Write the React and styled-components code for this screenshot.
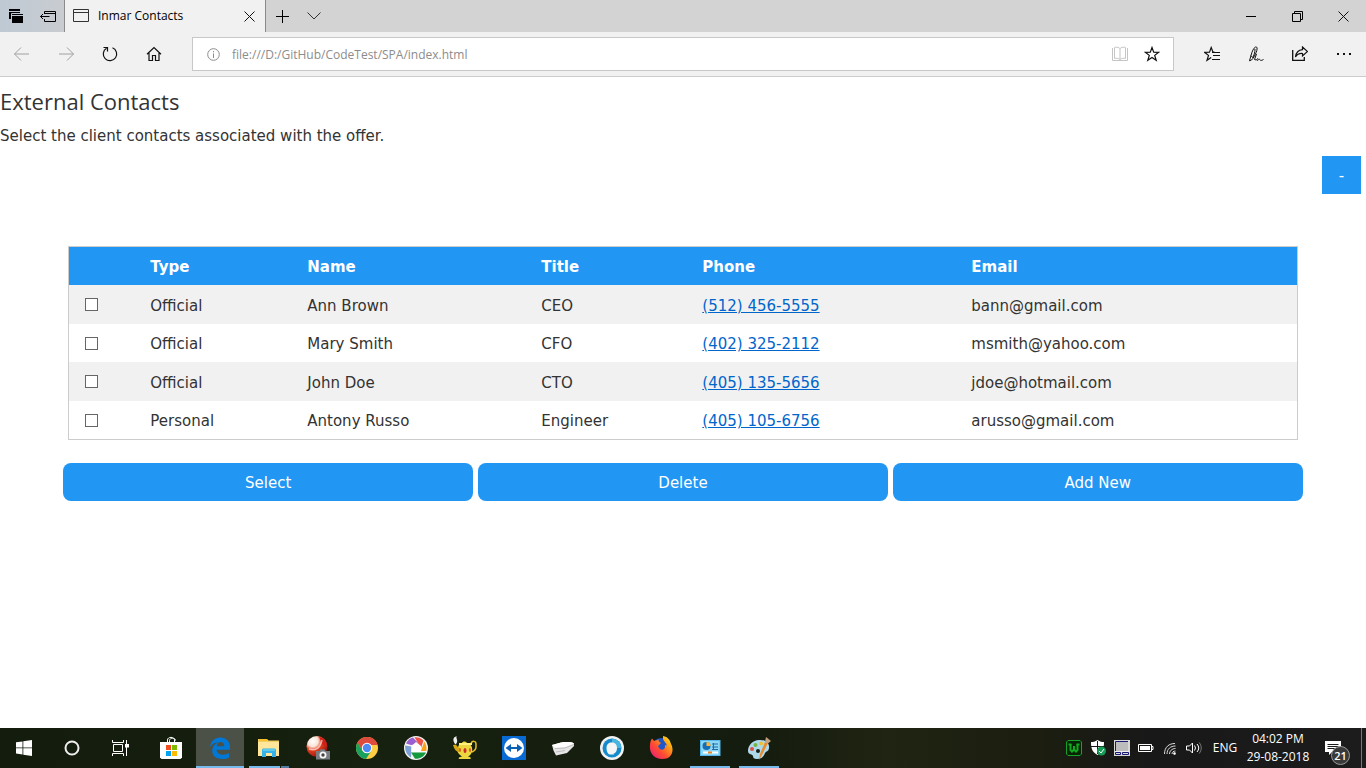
import React from "react";
import styled, { createGlobalStyle, css } from "styled-components";

const ui = `"Open Sans", "Noto Sans", sans-serif`;
const blue = "#2196f3";

const GlobalStyle = createGlobalStyle`
  *, *::before, *::after { box-sizing: border-box; }
  body {
    margin: 0;
    background: #fff;
    color: #333;
    font: 15px/22px "DejaVu Sans", Verdana, sans-serif;
  }
  button { margin: 0; padding: 0; border: 0; background: none; color: inherit; font: inherit; cursor: pointer; }
  svg { display: block; flex: none; }
`;

const Screen = styled.div`
  display: flex;
  flex-direction: column;
  min-height: 100vh;
`;

/* ---- browser chrome ---- */
const TitleBar = styled.header`
  display: flex;
  height: 32px;
  background: #d3d3d3;
  color: #000;
  font-family: ${ui};
  font-size: 12px;
`;
const TabTools = styled.div`
  display: flex;
  width: 64px;
  background: linear-gradient(90deg, #bec9d4, #c9ccd0);
`;
const ChromeButton = styled.button`
  display: flex;
  align-items: center;
  justify-content: center;
  width: ${(p) => p.$w || 44}px;
  height: 100%;
  color: ${(p) => (p.$muted ? "#a0a0a0" : "#111")};
`;
const Tab = styled.div`
  display: flex;
  align-items: center;
  width: 202px;
  padding-left: 8px;
  background: #f1f1f1;
  border: solid #8a8a8a;
  border-width: 0 1px;
`;
const TabTitle = styled.span`
  flex: 1;
  margin-left: 9px;
  white-space: nowrap;
`;
const Spacer = styled.div`
  flex: 1;
`;
const Toolbar = styled.nav`
  display: flex;
  align-items: center;
  height: 45px;
  background: #f1f1f1;
  border-bottom: 1px solid #ccc;
`;
const AddressBar = styled.div`
  display: flex;
  flex: 1;
  align-items: center;
  height: 34px;
  margin: 0 16px;
  padding: 0 5px 0 14px;
  background: #fff;
  border: 1px solid #c8c8c8;
  color: #8c8c8c;
`;
const AddressInput = styled.input`
  flex: 1;
  min-width: 0;
  margin-left: 12px;
  padding: 2px 0 0;
  border: 0;
  outline: 0;
  background: none;
  color: #8c8c8c;
  font: 12px/18px ${ui};
`;

/* ---- page ---- */
const Page = styled.main`
  flex: 1;
  padding-top: 6px;
`;
const Heading = styled.h3`
  margin: 0;
  font: 400 22px/36px ${ui};
`;
const Intro = styled.p`
  margin: 6px 0 9px;
`;
const ToggleRow = styled.div`
  display: flex;
  justify-content: flex-end;
  padding-right: 5px;
`;
const ToggleButton = styled.button`
  width: 39px;
  height: 38px;
  padding-top: 2px;
  background: ${blue};
  color: #fff;
`;
const ContactTable = styled.table`
  width: 90%;
  margin: 52px auto 23px;
  border: 1px solid #ccc;
  border-spacing: 0;
  table-layout: fixed;
`;
const HeadCell = styled.th`
  width: ${(p) => (p.$w ? `${p.$w}px` : "auto")};
  height: 38px;
  padding: 2px 8px 0;
  background: ${blue};
  color: #fff;
  text-align: left;
`;
const Row = styled.tr`
  height: 38px;
  &:nth-child(odd) { height: 39px; background: #f1f1f1; }
`;
const Cell = styled.td`
  padding: 2px 8px 0;
  &:first-child { padding: 0 8px 0 16px; }
`;
const Check = styled.input`
  display: block;
  width: 13px;
  height: 13px;
  margin: 0;
  appearance: none;
  background: #fff;
  border: 1px solid #666;
  &:checked { background: ${blue}; }
`;
const PhoneLink = styled.a`
  color: #0066cc;
`;
const Actions = styled.div`
  display: flex;
  justify-content: center;
  gap: 5px;
`;
const ActionButton = styled.button`
  width: 30%;
  height: 38px;
  padding-top: 2px;
  border-radius: 8px;
  background: ${blue};
  color: #fff;
`;

/* ---- taskbar ---- */
const Taskbar = styled.footer`
  display: flex;
  height: 40px;
  background: linear-gradient(90deg, #131c0d, #17210f 30%, #141c0f 55%, #202412 65%, #1b1e10 76%, #181818 84%, #1c1c1c);
  color: #fff;
  font-family: ${ui};
  font-size: 12px;
  line-height: 18px;
`;
const AppList = styled.div`
  display: flex;
  gap: 1px;
  padding-left: 3px;
`;
const TaskButton = styled.button`
  position: relative;
  display: flex;
  align-items: center;
  justify-content: center;
  width: 48px;
  height: 40px;
  ${(p) => p.$state && css`
    background: ${p.$state === "active" ? "#4b5146" : "none"};
    &::after {
      content: "";
      position: absolute;
      bottom: 0;
      left: ${p.$state === "active" ? 0 : 4}px;
      right: ${p.$state === "active" ? 0 : 4}px;
      height: 2px;
      background: ${p.$state === "stacked" ? "linear-gradient(90deg, #76b9ed 31px, #17210f 31px, #17210f 32px, #527da0 32px)" : "#76b9ed"};
    }
  `}
`;
const Tray = styled.div`
  display: flex;
  align-items: center;
`;
const TrayButton = styled.button`
  display: flex;
  align-items: center;
  justify-content: center;
  width: 24px;
  height: 40px;
`;
const Language = styled.button`
  width: 32px;
  height: 40px;
  padding-left: 6px;
`;
const Clock = styled.time`
  width: 80px;
  text-align: center;
`;
const Notifications = styled.button`
  position: relative;
  width: 43px;
  height: 40px;
  padding-left: 7px;
`;
const Badge = styled.span`
  position: absolute;
  top: 18px;
  left: 13px;
  width: 19px;
  height: 19px;
  border: 1px solid #999;
  border-radius: 50%;
  background: #3a3a3a;
  font-size: 11px;
  font-weight: 600;
  line-height: 17px;
  text-align: center;
`;
const ShowDesktop = styled.button`
  width: 5px;
  height: 40px;
  border-left: 1px solid #777;
`;

const Line = ({ w = 16, h = 16, children, sw = 1, ...rest }) => (
  <svg width={w} height={h} viewBox={`0 0 ${w} ${h}`} fill="none" stroke="currentColor" strokeWidth={sw} aria-hidden="true" {...rest}>
    {children}
  </svg>
);
const Art = ({ size = 24, children }) => (
  <svg width={size} height={size} viewBox="0 0 24 24" aria-hidden="true">{children}</svg>
);

const StackIcon = () => (
  <Line><path d="M1 1h11v4h3v10H4v-4H1z" fill="#000" stroke="none" /><path d="M1 3.5h11M3.5 11V5.500H15M4 7.500h11" stroke="#c0cad4" /></Line>
);
const SetAsideIcon = () => (
  <Line><path d="M4.5 6V3.5h11v10h-11V11M5 5.5h10M.5 8.500h9M3 6L.5 8.500 3 11" stroke="#000" /></Line>
);
const WindowIcon = () => (
  <Line w={16} h={14}><path d="M.5.5h15v12H.5zM.5 3.500h15" stroke="#333" /></Line>
);
const CloseIcon = () => <Line w={11} h={11}><path d="M.5.5l10 10M10.500.5l-10 10" /></Line>;
const PlusIcon = () => <Line w={13} h={13}><path d="M6.500 0v13M0 6.500h13" stroke="#000" /></Line>;
const ChevronIcon = () => <Line w={14} h={8}><path d="M.5.5L7 7 13.500.5" stroke="#333" /></Line>;
const MinimizeIcon = () => <Line w={10} h={10}><path d="M0 5.500h10" stroke="#000" /></Line>;
const RestoreIcon = () => <Line w={11} h={11}><path d="M.5 2.500h8v8h-8zM2.500 2V.5h8v8H9" stroke="#000" /></Line>;
const BackIcon = () => <Line><path d="M.5 8H15M7 1.500L.5 8 7 14.500" /></Line>;
const ForwardIcon = () => <Line><path d="M1 8h14.500M9 1.500L15.500 8 9 14.500" /></Line>;
const RefreshIcon = () => <Line sw={1.2}><path d="M4.500 2.300A6.700 6.700 0 1 0 10.500 1.800M1.500 1.500H5.500V5.500" /></Line>;
const HomeIcon = () => <Line sw={1.2}><path d="M1 8.300L8 1.500l7 6.800M3 7v7.500h3.500V9.500h3v5H13V7" /></Line>;
const InfoIcon = () => <Line w={13} h={13}><circle cx="6.500" cy="6.500" r="5.800" /><path d="M6.500 5.500V10M6.500 3v1.300" /></Line>;
const BookIcon = () => (
  <Line><path d="M.5 2v12.500h15V2" stroke="#c5c5c5" /><path d="M8 2.500C6.500 1 3.500 1 2.500 1.500v11c1.500-.5 4-.3 5.500 1 1.500-1.300 4-1.500 5.500-1v-11C12.500 1 9.500 1 8 2.500zv11" stroke="#c5c5c5" /></Line>
);
const starPath = "M8 1.500l1.700 4.700 5 .1-4 3.100 1.500 4.900L8 11.400l-4.200 2.900 1.500-4.900-4-3.100 5-.1z";
const StarIcon = () => <Line sw={1.2}><path d={starPath} /></Line>;
const FavoritesIcon = () => (
  <Line><path d="M10.500 6.200H9L7.200 1.500 5.500 6.200l-5 .1 4 3.100L3 14.300l4.200-2.900" strokeWidth="1.200" /><path d="M8 6.500h8M9 9.500h7M8 13.500h8" /></Line>
);
const PenIcon = () => (
  <Line><path d="M1.500 14.800L3 9.500C4 5.500 5.500 2 7.500 1c2-.5 2 2 .7 5.300C7.200 9.200 5.500 12 3.500 14l-2 .8zM4.500 12C6 9.500 7 6.500 7 3M2.800 9.500l1.500 1.500M9.500 14.800c1-2.300 2-2 2.400-1s2 .7 3.600-.3M8.500 8L6.500 13.500q1.500 1.500 3.500-1" /></Line>
);
const ShareIcon = () => (
  <Line><path d="M.7 4v10.300h11.600V11" strokeWidth="1.300" /><path d="M10.500 1l5 4.500-5 4.500V7.500C7 7.200 5 8.500 3.500 11 4 7 6.500 4 10.500 3.700z" strokeWidth="1.200" /></Line>
);
const DotsIcon = () => <Line><path d="M1 8h2M7 8h2M13 8h2" strokeWidth="2" /></Line>;

const WindowsIcon = () => (
  <svg width="16" height="16" viewBox="0 0 16 16" fill="#fff" aria-hidden="true"><path d="M0 2.300L6.500 1.400V7.500H0zM7.300 1.300L16 0v7.500H7.300zM0 8.300h6.500v6.200L0 13.600zM7.300 8.300H16V16l-8.700-1.300z" /></svg>
);
const CortanaIcon = () => <Line sw={2}><circle cx="8" cy="8" r="6.500" stroke="#eee" /></Line>;
const TaskViewIcon = () => (
  <Line w={17}><path d="M.5 0v2.500h11V0M.5 16v-2.500h11V16M1.500 4.500h9v7h-9zM14.500 0v16" /><path d="M13 4h4v3.500h-4z" fill="#fff" stroke="none" /></Line>
);
const StoreIcon = () => (
  <Art><path d="M8.500 7V4c0-3.500 7-3.500 7 0v3M10.500 6V4.500c0-3 6-3 6 0" fill="none" stroke="#fff" /><path d="M1 6h22v15.500l-1.500 1.500h-19L1 21.500z" fill="#fff" /><path d="M7 9h5v5H7z" fill="#f25022" /><path d="M13 9h5v5h-5z" fill="#7fba00" /><path d="M7 15h5v5H7z" fill="#00a4ef" /><path d="M13 15h5v5h-5z" fill="#ffb900" /></Art>
);
const EdgeIcon = () => (
  <Art><path d="M2 11C2.800 5 7 1.500 12.300 1.500c6 0 9.700 4.300 9.700 9.500v2.700H8.500c.2 3.500 3.300 5 6.500 5 2.500 0 4.500-.7 6-1.700v4.500c-1.800 1-4.200 1.500-6.700 1.500-6.300 0-10-3.300-10-8.200 0-4.300 2.400-7 6.200-8.600C6.500 6.400 3.800 8 2 11zm6.700-.8h7.600c0-2.500-1.300-4.200-3.600-4.200-2.100 0-3.600 1.600-4 4.200z" fill="#0078d7" /></Art>
);
const ExplorerIcon = () => (
  <Art><path d="M1 3h9l1.500 1.500H22V20H1z" fill="#f4cf62" /><path d="M1 6h21v14H1z" fill="#ffe69b" /><path d="M2 3h8v2H2z" fill="#fbc02d" /><path d="M5 21v-7.500L6 12.500h12l1 1V21h-4v-4H9v4z" fill="#35b2e8" /><path d="M6 13h12v2H6z" fill="#5cc9ef" /></Art>
);
const CaptureIcon = () => (
  <Art><defs><radialGradient id="ball" cx=".3" cy=".25" r=".85"><stop offset="0" stopColor="#fff" /><stop offset=".3" stopColor="#f9e4d8" /><stop offset=".5" stopColor="#e5401f" /><stop offset="1" stopColor="#8f0d0d" /></radialGradient></defs><circle cx="11" cy="10.500" r="10.500" fill="url(#ball)" /><path d="M13 1c5 1 8 5 8 9l-4-1z" fill="#cf1f1a" /><path d="M3 13c6 2 11 0 13-9" fill="none" stroke="#fff" strokeWidth="1.500" opacity=".6" /><path d="M10 15h3.500l1-1.800h4l1 1.800H24v8.500H10z" fill="#777d80" /><circle cx="17" cy="19" r="3.500" fill="#f7f7f7" /><circle cx="17" cy="19" r="1.700" fill="#444" /></Art>
);
const ChromeIcon = () => (
  <Art><circle cx="12" cy="12" r="11" fill="#ffcd41" /><path d="M2.500 6.500A11 11 0 0 1 22.600 9H12L7 14.500z" fill="#dd4b3e" /><path d="M2.500 6.500A11 11 0 0 0 11 23l5.500-8.500L12 17c-2 0-4-1-5-3z" fill="#1aa15f" /><circle cx="12" cy="12" r="5.200" fill="#fff" /><circle cx="12" cy="12" r="4.200" fill="#4c8bf5" /></Art>
);
const PicasaIcon = () => (
  <Art><circle cx="12" cy="12" r="12" fill="#f5f5f5" /><path d="M2 7.500C3.500 4 6 2 9 1.500L15 8 7 9z" fill="#9a5fd0" /><path d="M10.500 1.200c3.500-.3 7 .8 9 3.300L17 12z" fill="#f05348" /><path d="M20.300 5.500c2 2.700 2.700 6 2 9.500H17z" fill="#f9a11b" /><path d="M22 16.500c-2 4-5.500 6.500-11 6.300l-4-6.300z" fill="#149a3c" /><path d="M1.200 9.500c-.5 5 1.500 9.500 5.800 12l.5-11z" fill="#7c9fd4" /><path d="M7.500 16V10L12 6l5 4v6z" fill="#fff" /></Art>
);
const LampIcon = () => (
  <Art><path d="M6 23c-1-1 0-2 3-2.500C4 17 3 14 6 9l3-2c.5-2 4-2 5 0 4 1 6 4 5 9-1 2-2 4-4 4.500 3 .5 3 1.500 2.500 2.500z" fill="#edd540" /><path d="M6 16C2 15 1 12 0 9l3-.5c1 2 2 3 4 3.500" fill="#d6a514" /><path d="M18 8c1-4 5-3 5 0v3c0 3-2 4-4 5" fill="none" stroke="#e3bd22" strokeWidth="1.500" /><path d="M6 8h13" stroke="#fff17c" strokeWidth="2" /><ellipse cx="12" cy="14.500" rx="1.500" ry="2.500" fill="#ca2d28" /><ellipse cx="7" cy="14" rx="1" ry="2" fill="#d95f22" /><ellipse cx="17" cy="14" rx="1" ry="2" fill="#d95f22" /><path d="M2 8C-1 4 .5 0 4 .5 2 2 6 4 3 8z" fill="#eee" /></Art>
);
const TeamViewerIcon = () => (
  <Art><path d="M0 0h24v24H0z" fill="#086ad2" /><circle cx="12" cy="12" r="10" fill="#fff" /><path d="M3.500 12L9 8v3h6V8l5.500 4-5.500 4v-3H9v3z" fill="#0b61b6" /></Art>
);
const RouterIcon = () => (
  <Art><path d="M1 9L10 6.500c6-.8 11-.5 13 1v2.500l-7 7-11 2.500-2.500-5z" fill="#e6e6e6" /><path d="M1 9l9-2.500c6-.8 11-.5 13 1L14 11.500 4 12z" fill="#fff" /><path d="M4 12.500l10-.5 9-3.500M5 16l9-1.500" fill="none" stroke="#bdbdbd" /></Art>
);
const QuickIcon = () => (
  <Art><circle cx="12" cy="12" r="12" fill="#f2f2f2" /><circle cx="12" cy="12" r="9.500" fill="#168bcc" /><path d="M12 2.500a9.500 9.500 0 0 1 9.500 9.500H12z" fill="#48b4df" /><path d="M12 6.500c3.500 0 5 2.500 5 5.500s-1.500 5.500-3.500 5.500l.5 1h-4c-2 0-3.500-3-3.500-6.500S8.500 6.500 12 6.500z" fill="#f5f5f5" /></Art>
);
const FirefoxIcon = () => (
  <Art><defs><linearGradient id="fox" x1="0" y1="1" x2="1" y2="0"><stop offset="0" stopColor="#e31587" /><stop offset=".4" stopColor="#ff4b32" /><stop offset=".75" stopColor="#ffaf12" /><stop offset="1" stopColor="#fff34f" /></linearGradient></defs><circle cx="12" cy="11" r="9" fill="#1f56c9" /><path d="M1 9c0-3 1-5 2-6.500L5 5l5-1.500C9 5 10 6 12 7l-3 3 1 2c2 3 7 2 6-3 2 0 2 2 2 2 0-4-3-5-4-8V0c5 1 7 4 8 8 2.500 4 1.500 9 0 11-2 3-5 4-9 4C5 23 0 17 1 9z" fill="url(#fox)" /></Art>
);
const PanelIcon = () => (
  <Art><path d="M2 4h20.500v16H2z" fill="#58b7ea" /><path d="M3 5h18.500v14H3z" fill="#8bd7f7" /><circle cx="8.500" cy="10" r="4" fill="#176eb5" /><path d="M8.500 10V6a4 4 0 0 1 4 4z" fill="#ffba35" /><path d="M14 8h6M14 11h6M14 13.500h6M15.500 7v7" stroke="#236da2" /><path d="M5 16.500h15" stroke="#fff" strokeWidth="2" /><path d="M10 16.500h4" stroke="#e5872d" strokeWidth="2" /></Art>
);
const PaintIcon = () => (
  <Art><path d="M1 15C1 9 6 4 12 4c6-.5 11 3 10 8-.5 4-3 3-4 5-1 3-3 6-8 6-3 0-4-1-4-3s-5-1-5-5z" fill="#add9ed" /><circle cx="5" cy="13" r="2" fill="#dd5145" /><circle cx="8.500" cy="9" r="2" fill="#75b443" /><circle cx="14" cy="7.500" r="2" fill="#f2bf31" /><circle cx="11" cy="15" r="2" fill="#151e15" /><path d="M18 6l3 1-6 12-3 5 1-6z" fill="#e88b2d" /><path d="M18 6l1-5 5 4-3 2.500z" fill="#c6a17d" /></Art>
);

const UpdateIcon = () => (
  <Line><path d="M2 .5h12L15.500 2v12L14 15.500H2L.5 14V2z" fill="#052505" stroke="#16a22b" /><path d="M2.500 4.500h3M10.500 4.500h3" stroke="#12a81f" strokeWidth="2" /><path d="M4.500 4v6L6 11.500 8 9.500l2 2 1.500-1.500V4M8 6v4" stroke="#12a81f" strokeWidth="2" /></Line>
);
const ShieldIcon = () => (
  <Line><path d="M7.500 0C5 1.700 3 2 1 2c0 6 1 10 6.500 13C13 12 14 8 14 2c-2 0-4-.3-6.500-2z" fill="#fff" stroke="none" /><path d="M7.500 1v13M1 6.500h13" stroke="#181818" /><circle cx="11.500" cy="11" r="4.500" fill="#179b55" stroke="none" /><path d="M9 11l2 2 3-4" stroke="#fff" /></Line>
);
const MonitorIcon = () => (
  <Line><path d="M0 0h16v16H0z" fill="#d8d8d8" stroke="none" /><path d="M1.500 11V1.500H14" stroke="#181875" /><path d="M2 2h12v9H2z" fill="#bcbcbc" stroke="none" /><path d="M1 11.500h14" stroke="#eee" /><path d="M1.500 14.500v-2h5v2zM8.500 14.500v-2h6v2z" fill="#d8d8d8" stroke="#181875" /></Line>
);
const BatteryIcon = () => (
  <Line><path d="M.5 4.500h13v7H.5zM13.500 6.500h1.500v3h-1.500" /><path d="M2 6h10v4H2z" fill="#fff" stroke="none" /></Line>
);
const WifiIcon = () => (
  <Line stroke="#ddd"><path d="M2.500 14C2.500 7 7 3.500 13 3.500M5 14C5 9 8.500 6 13.500 6M7.500 14c0-3 2.500-5.500 6-5.500M10 14c0-2 1.500-3 3.500-3" /><circle cx="12.500" cy="13.500" r="1" fill="#fff" /></Line>
);
const SpeakerIcon = () => (
  <Line><path d="M.5 6h3L6.500 3v10l-3-3h-3zM8.500 5.500q2 2.500 0 5M11 4q3.500 4 0 8" /><path d="M13.300 2.500q4 5.500 0 11" stroke="#777" /></Line>
);
const MessageIcon = () => (
  <Line w={16} h={14}><path d="M0 0h16v11H7l-3 3v-3H0z" fill="#fff" stroke="none" /><path d="M2.500 3.500h11M2.500 5.500h11M2.500 7.500h8" stroke="#1c1c1c" /></Line>
);

const columns = [["", 73], ["Type", 157], ["Name", 234], ["Title", 161], ["Phone", 269], ["Email"]];
const contacts = [
  ["Official", "Ann Brown", "CEO", "(512) 456-5555", "bann@gmail.com"],
  ["Official", "Mary Smith", "CFO", "(402) 325-2112", "msmith@yahoo.com"],
  ["Official", "John Doe", "CTO", "(405) 135-5656", "jdoe@hotmail.com"],
  ["Personal", "Antony Russo", "Engineer", "(405) 105-6756", "arusso@gmail.com"],
];
const systemButtons = [["Start", WindowsIcon], ["Cortana", CortanaIcon], ["Task view", TaskViewIcon]];
const apps = [
  ["Store", StoreIcon], ["Edge", EdgeIcon, "active"], ["File Explorer", ExplorerIcon, "stacked"],
  ["Screen capture", CaptureIcon], ["Chrome", ChromeIcon], ["Picasa", PicasaIcon], ["Lamp", LampIcon],
  ["TeamViewer", TeamViewerIcon], ["Router", RouterIcon], ["Assistant", QuickIcon], ["Firefox", FirefoxIcon],
  ["Control Panel", PanelIcon, "open"], ["Paint", PaintIcon, "open"],
];
const tray = [["Updates", UpdateIcon], ["Security", ShieldIcon], ["Display", MonitorIcon], ["Battery", BatteryIcon], ["Network", WifiIcon], ["Volume", SpeakerIcon]];

const Browser = () => (
  <>
    <TitleBar>
      <TabTools>
        <ChromeButton $w={32} aria-label="Tabs set aside"><StackIcon /></ChromeButton>
        <ChromeButton $w={32} aria-label="Set tabs aside"><SetAsideIcon /></ChromeButton>
      </TabTools>
      <Tab>
        <WindowIcon />
        <TabTitle>Inmar Contacts</TabTitle>
        <ChromeButton $w={32} aria-label="Close tab"><CloseIcon /></ChromeButton>
      </Tab>
      <ChromeButton $w={32} aria-label="New tab"><PlusIcon /></ChromeButton>
      <ChromeButton $w={32} aria-label="Tab previews"><ChevronIcon /></ChromeButton>
      <Spacer />
      <ChromeButton $w={46} aria-label="Minimize"><MinimizeIcon /></ChromeButton>
      <ChromeButton $w={46} aria-label="Restore"><RestoreIcon /></ChromeButton>
      <ChromeButton $w={46} aria-label="Close"><CloseIcon /></ChromeButton>
    </TitleBar>
    <Toolbar>
      <ChromeButton $muted aria-label="Back"><BackIcon /></ChromeButton>
      <ChromeButton $muted aria-label="Forward"><ForwardIcon /></ChromeButton>
      <ChromeButton aria-label="Refresh"><RefreshIcon /></ChromeButton>
      <ChromeButton aria-label="Home"><HomeIcon /></ChromeButton>
      <AddressBar>
        <InfoIcon />
        <AddressInput aria-label="Address" defaultValue="file:///D:/GitHub/CodeTest/SPA/index.html" />
        <ChromeButton $w={32} aria-label="Reading view"><BookIcon /></ChromeButton>
        <ChromeButton $w={32} aria-label="Add to favorites"><StarIcon /></ChromeButton>
      </AddressBar>
      <ChromeButton aria-label="Favorites"><FavoritesIcon /></ChromeButton>
      <ChromeButton aria-label="Add notes"><PenIcon /></ChromeButton>
      <ChromeButton aria-label="Share"><ShareIcon /></ChromeButton>
      <ChromeButton aria-label="More"><DotsIcon /></ChromeButton>
    </Toolbar>
  </>
);

const Contacts = () => (
  <Page>
    <Heading>External Contacts</Heading>
    <Intro>Select the client contacts associated with the offer.</Intro>
    <ToggleRow><ToggleButton>-</ToggleButton></ToggleRow>
    <ContactTable>
      <thead>
        <tr>{columns.map(([name, w]) => <HeadCell key={name} $w={w}>{name}</HeadCell>)}</tr>
      </thead>
      <tbody>
        {contacts.map(([type, name, title, phone, email]) => (
          <Row key={name}>
            <Cell><Check type="checkbox" aria-label={name} /></Cell>
            <Cell>{type}</Cell>
            <Cell>{name}</Cell>
            <Cell>{title}</Cell>
            <Cell><PhoneLink href={`tel:${phone.replace(/\D/g, "")}`}>{phone}</PhoneLink></Cell>
            <Cell>{email}</Cell>
          </Row>
        ))}
      </tbody>
    </ContactTable>
    <Actions>
      <ActionButton>Select</ActionButton>
      <ActionButton>Delete</ActionButton>
      <ActionButton>Add New</ActionButton>
    </Actions>
  </Page>
);

export default function App() {
  return (
    <Screen>
      <GlobalStyle />
      <Browser />
      <Contacts />
      <Taskbar>
        {systemButtons.map(([name, Icon]) => <TaskButton key={name} aria-label={name}><Icon /></TaskButton>)}
        <AppList>
          {apps.map(([name, Icon, state]) => <TaskButton key={name} aria-label={name} $state={state}><Icon /></TaskButton>)}
        </AppList>
        <Spacer />
        <Tray>
          {tray.map(([name, Icon]) => <TrayButton key={name} aria-label={name}><Icon /></TrayButton>)}
          <Language>ENG</Language>
          <Clock>04:02 PM<br />29-08-2018</Clock>
          <Notifications aria-label="21 notifications"><MessageIcon /><Badge>21</Badge></Notifications>
          <ShowDesktop aria-label="Show desktop" />
        </Tray>
      </Taskbar>
    </Screen>
  );
}
